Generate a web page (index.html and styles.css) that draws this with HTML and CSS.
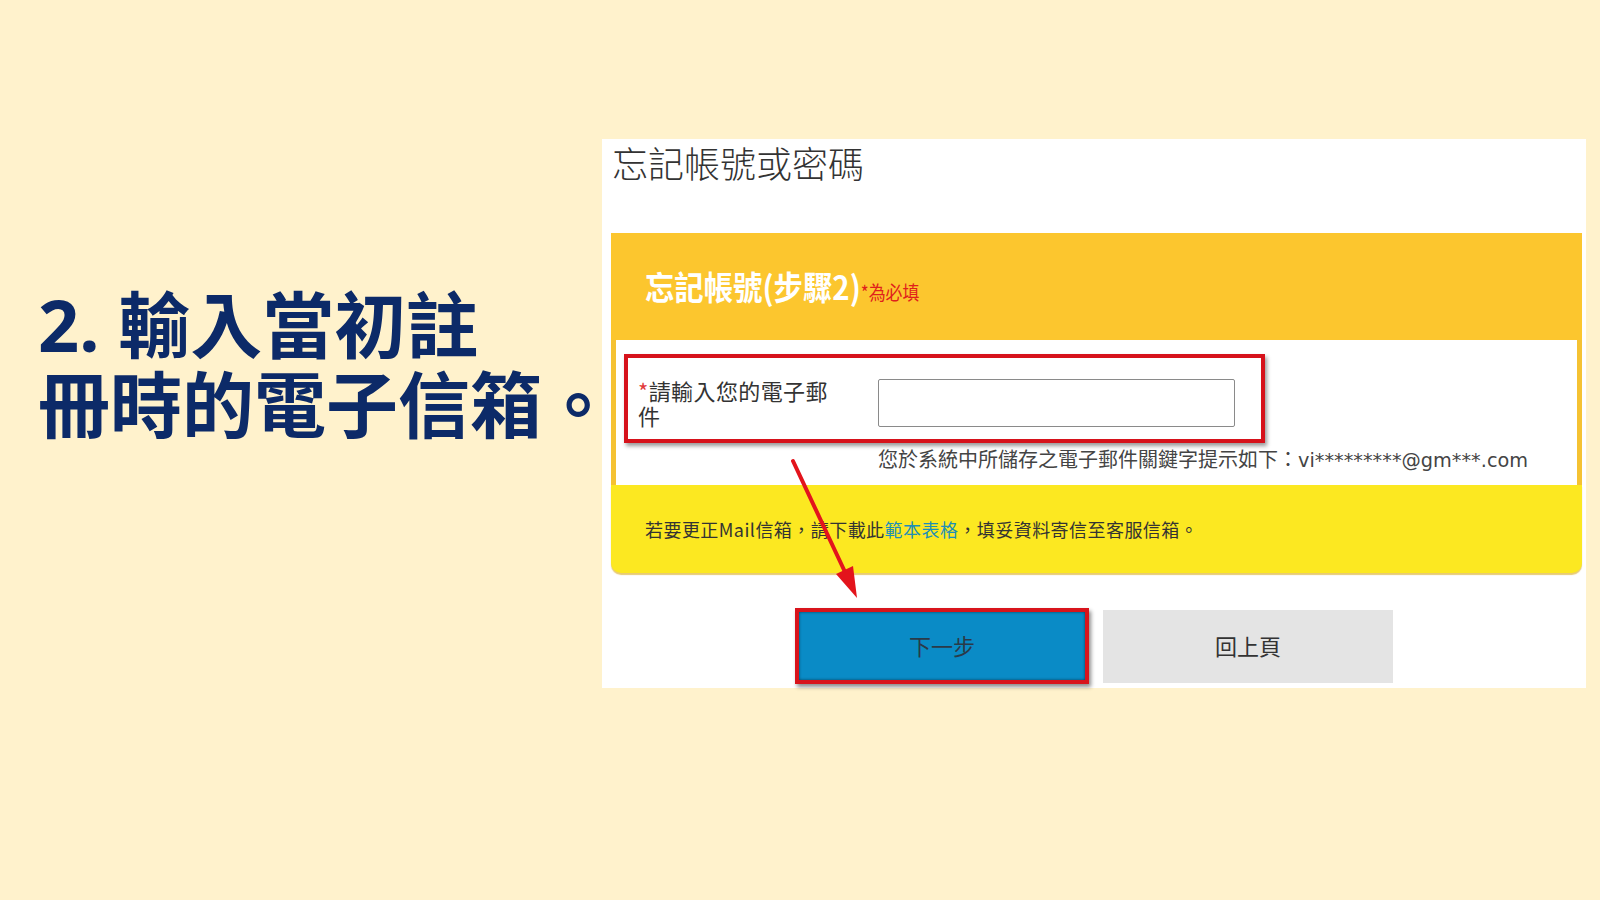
FILE: index.html
```html
<!DOCTYPE html>
<html lang="zh-Hant">
<head>
<meta charset="utf-8">
<title>忘記帳號或密碼</title>
<link rel="stylesheet" href="styles.css">
</head>
<body>
<div class="slide">
  <div class="headline">2. 輸入當初註<br>冊時的電子信箱。</div>
  <div class="panel">
    <div class="page-title">忘記帳號或密碼</div>
    <div class="box">
      <div class="box-head">
        <span class="head-text">忘記帳號(步驟2)<span class="req">*為必填</span></span>
      </div>
      <div class="box-body">
        <div class="field-row">
          <label class="field-label" for="email"><span class="star">*</span>請輸入您的電子郵件</label>
          <input class="field-input" id="email" type="text">
        </div>
        <div class="hint">您於系統中所儲存之電子郵件關鍵字提示如下：<span class="hint-mail">vi*********@gm***.com</span></div>
      </div>
      <div class="box-foot">
        <span class="foot-text">若要更正Mail信箱，請下載此<a class="link" href="#">範本表格</a>，填妥資料寄信至客服信箱。</span>
      </div>
    </div>
    <div class="buttons">
      <button class="btn btn-next">下一步</button>
      <button class="btn btn-back">回上頁</button>
    </div>
    <svg class="arrow" width="984" height="549" viewBox="0 0 984 549">
      <line x1="191" y1="322" x2="243" y2="433" stroke="#e3141c" stroke-width="4" stroke-linecap="round"/>
      <polygon points="255,459 251,427 234,435" fill="#e3141c"/>
    </svg>
  </div>
</div>
</body>
</html>
```
FILE: styles.css
```css
html, body {
  margin: 0;
  padding: 0;
}
body {
  background: #fff2cc;
  width: 1600px;
  height: 900px;
  overflow: hidden;
  font-family: "Noto Sans CJK TC", sans-serif;
}
.slide {
  display: flex;
  align-items: flex-start;
  padding-top: 139px;
}
.headline {
  box-sizing: border-box;
  width: 602px;
  padding: 145px 0 0 38px;
  font-family: "Noto Sans", "Noto Sans CJK TC", sans-serif;
  font-size: 72px;
  line-height: 80px;
  font-weight: 700;
  color: #0c2a68;
  white-space: nowrap;
}
.panel {
  position: relative;
  box-sizing: border-box;
  width: 984px;
  height: 549px;
  background: #ffffff;
  padding-top: 3px;
}
.page-title {
  padding-left: 10px;
  height: 40px;
  line-height: 40px;
  font-size: 36px;
  font-weight: 300;
  color: #333333;
  margin-bottom: 51px;
}
.box {
  margin-left: 9px;
  width: 971px;
}
.box-head {
  height: 107px;
  background: #fcc62e;
  display: flex;
  align-items: center;
  padding-left: 34px;
  padding-top: 4px;
  box-sizing: border-box;
}
.head-text {
  display: inline-block;
  transform: scaleX(0.89);
  transform-origin: left center;
  font-size: 33px;
  font-weight: 700;
  color: #ffffff;
  white-space: nowrap;
  line-height: 40px;
}
.req {
  font-size: 19px;
  font-weight: 400;
  color: #e0201b;
}
.box-body {
  height: 145px;
  background: #ffffff;
  border-left: 5px solid #f5c232;
  border-right: 5px solid #f5c232;
  padding-top: 14px;
  box-sizing: border-box;
}
.field-row {
  display: flex;
  align-items: flex-start;
  box-sizing: border-box;
  width: 641px;
  height: 89px;
  margin-left: 8px;
  border: 4px solid #d6121b;
  box-shadow: 2px 3px 4px rgba(0, 0, 0, 0.4);
  padding: 20px 0 0 10px;
}
.field-label {
  width: 200px;
  font-size: 22px;
  letter-spacing: 0.4px;
  line-height: 25px;
  color: #333333;
}
.star {
  color: #e23a3a;
}
.field-input {
  margin-left: 40px;
  margin-top: 1px;
  box-sizing: border-box;
  width: 357px;
  height: 48px;
  border: 1px solid #8a8a8a;
  border-radius: 2px;
  background: #ffffff;
  padding: 0;
}
.hint {
  margin-top: 4px;
  padding-left: 262px;
  font-size: 20px;
  line-height: 24px;
  color: #444444;
  white-space: nowrap;
}
.hint-mail {
  font-family: "DejaVu Sans", sans-serif;
  font-size: 19.3px;
}
.box-foot {
  height: 88px;
  background: #fce821;
  border-radius: 0 0 10px 10px;
  box-shadow: 0 2px 1px rgba(214, 160, 0, 0.55);
  display: flex;
  align-items: center;
  padding-left: 34px;
}
.foot-text {
  font-size: 18px;
  letter-spacing: 0.45px;
  color: #333333;
  white-space: nowrap;
}
.link {
  color: #1e8fb6;
  text-decoration: none;
}
.buttons {
  display: flex;
  justify-content: center;
  align-items: center;
  gap: 14px;
  margin-top: 35px;
}
.btn {
  font-family: "Noto Sans CJK TC", sans-serif;
  font-size: 22px;
  line-height: 28px;
  color: #333333;
  border: none;
  padding: 0 0 3px;
  cursor: pointer;
}
.btn-next {
  box-sizing: border-box;
  width: 294px;
  height: 76px;
  background: #0a8bc6;
  border: 4px solid #d8141c;
  box-shadow: 2px 3px 4px rgba(0, 0, 0, 0.45), inset 0 0 3px rgba(0, 0, 0, 0.55);
  color: #2a3a48;
}
.btn-back {
  width: 290px;
  height: 73px;
  background: #e4e4e4;
}
.arrow {
  position: absolute;
  left: 0;
  top: 0;
  pointer-events: none;
}
```
